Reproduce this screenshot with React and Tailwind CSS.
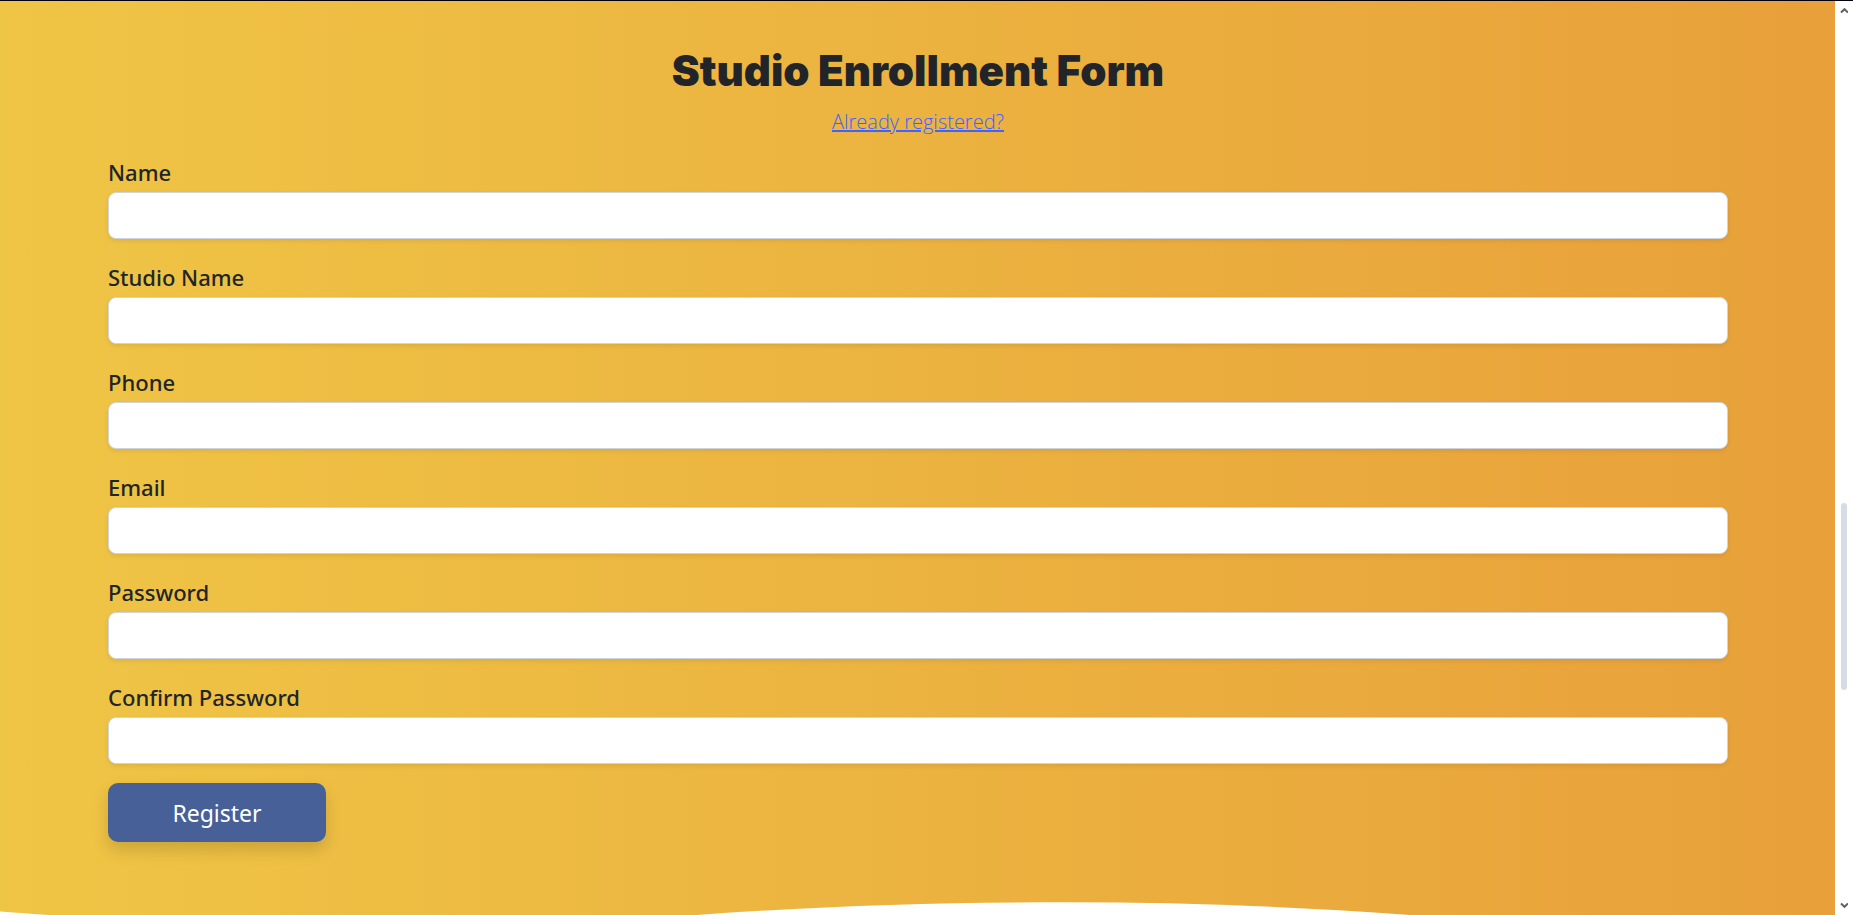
const fields = [
  { id: "name", label: "Name", type: "text" },
  { id: "studio-name", label: "Studio Name", type: "text" },
  { id: "phone", label: "Phone", type: "tel" },
  { id: "email", label: "Email", type: "email" },
  { id: "password", label: "Password", type: "password" },
  { id: "confirm-password", label: "Confirm Password", type: "password" },
];

function Field({ id, label, type }) {
  return (
    <div>
      <label
        htmlFor={id}
        className="block pb-1 text-[22px] leading-8 font-medium text-[#212529]"
      >
        {label}
      </label>
      <input
        id={id}
        type={type}
        className="block h-[47px] w-full rounded-lg border border-[#ced4da] bg-white px-3 text-xl shadow-[0_2px_4px_rgba(0,0,0,0.08)] outline-none"
      />
    </div>
  );
}

function Scrollbar() {
  return (
    <div
      className="flex w-[18px] shrink-0 flex-col items-center bg-white py-1.5"
      aria-hidden="true"
    >
      <svg width="8" height="7" viewBox="0 0 8 7" fill="none" stroke="#606060" strokeWidth="2">
        <path d="M1 5.500 4.500 2.200 8 5.500" />
      </svg>
      <div className="grow-[490]" />
      <div className="w-1.5 grow-[187] rounded-full bg-[#d5dce6]" />
      <div className="grow-[212]" />
      <svg width="8" height="7" viewBox="0 0 8 7" fill="none" stroke="#606060" strokeWidth="2">
        <path d="M1 1.500 4.500 4.800 8 1.500" />
      </svg>
    </div>
  );
}

export default function App() {
  return (
    <div className="flex min-h-screen border-t border-[#05000f] font-['Noto_Sans',sans-serif]">
      <main className="flex grow flex-col bg-linear-[90deg,#efc545,#e8a03a]">
        <div className="grow pt-11 pr-[107px] pl-[108px]">
          <header className="flex flex-col items-center">
            <h1 className="font-['Inter',sans-serif] text-[42px] leading-[52px] font-black text-[#212529]">
              Studio Enrollment Form
            </h1>
            <a
              href="#login"
              className="mt-[9px] font-['Open_Sans',sans-serif] text-xl leading-8 font-light text-[#4062ff] underline decoration-2"
            >
              Already registered?
            </a>
          </header>
          <form className="mt-[18px] flex flex-col items-start">
            <div className="flex w-full flex-col gap-[22px]">
              {fields.map((field) => (
                <Field key={field.id} {...field} />
              ))}
            </div>
            <button
              type="button"
              className="mt-[19px] h-[59px] w-[218px] rounded-[10px] bg-[#476198] pt-0.5 text-[23px] text-white shadow-[0_8px_16px_rgba(0,0,0,0.15)]"
            >
              Register
            </button>
          </form>
        </div>
        <svg
          className="block h-[13px] w-full"
          viewBox="0 0 1835 13"
          preserveAspectRatio="none"
          fill="#fff"
          aria-hidden="true"
        >
          <path d="M0 9.500 Q24 11 48 13 H0Z" />
          <path d="M697 13 C820 4 940 0.300 1065 0.300 C1180 0.300 1290 4 1410 13Z" />
        </svg>
      </main>
      <Scrollbar />
    </div>
  );
}
